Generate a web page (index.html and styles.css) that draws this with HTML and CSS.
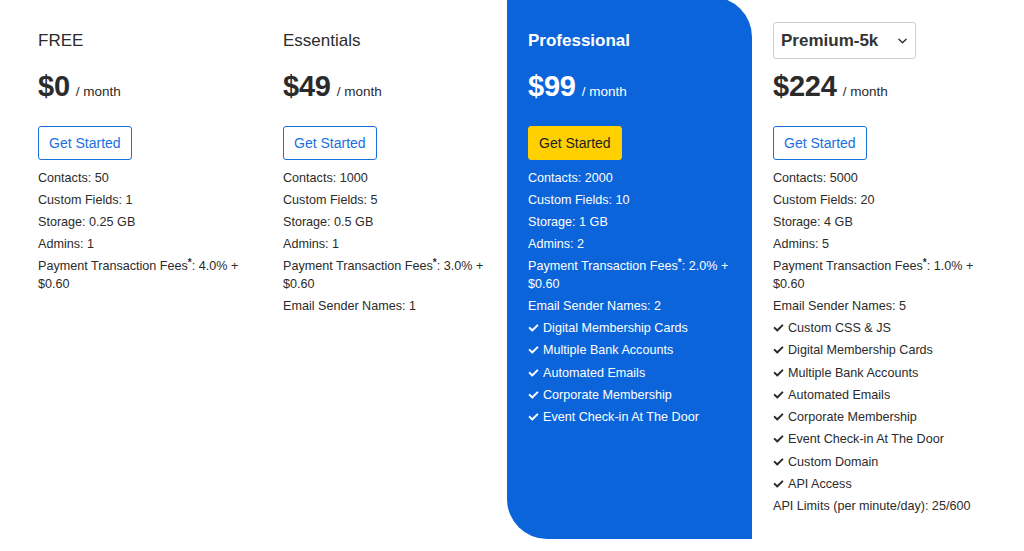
FILE: index.html
```html
<!DOCTYPE html>
<html>
<head>
<meta charset="utf-8">
<link rel="stylesheet" href="styles.css">
</head>
<body>
<svg width="0" height="0" style="position:absolute">
  <defs>
    <symbol id="chk" viewBox="0 0 512 512"><path d="M173.9 439.4L7.5 273c-10-10-10-26.2 0-36.2l36.2-36.2c10-10 26.2-10 36.2 0L192 312.7 432.1 72.6c10-10 26.2-10 36.2 0l36.2 36.2c10 10 10 26.2 0 36.2L210.1 439.4c-10 10-26.2 10-36.2 0z"/></symbol>
  </defs>
</svg>
<div class="plans">
  <section class="plan">
    <div class="head"><h2 class="name">FREE</h2></div>
    <div class="price"><span class="amount">$0</span><span class="per">/ month</span></div>
    <button class="btn">Get Started</button>
    <ul class="features">
      <li>Contacts: 50</li>
      <li>Custom Fields: 1</li>
      <li>Storage: 0.25 GB</li>
      <li>Admins: 1</li>
      <li>Payment Transaction Fees<span class="ast">*</span>: 4.0% +<br>$0.60</li>
    </ul>
  </section>
  <section class="plan">
    <div class="head"><h2 class="name">Essentials</h2></div>
    <div class="price"><span class="amount">$49</span><span class="per">/ month</span></div>
    <button class="btn">Get Started</button>
    <ul class="features">
      <li>Contacts: 1000</li>
      <li>Custom Fields: 5</li>
      <li>Storage: 0.5 GB</li>
      <li>Admins: 1</li>
      <li>Payment Transaction Fees<span class="ast">*</span>: 3.0% +<br>$0.60</li>
      <li>Email Sender Names: 1</li>
    </ul>
  </section>
  <section class="plan featured">
    <div class="head"><h2 class="name">Professional</h2></div>
    <div class="price"><span class="amount">$99</span><span class="per">/ month</span></div>
    <button class="btn btn-yellow">Get Started</button>
    <ul class="features">
      <li>Contacts: 2000</li>
      <li>Custom Fields: 10</li>
      <li>Storage: 1 GB</li>
      <li>Admins: 2</li>
      <li>Payment Transaction Fees<span class="ast">*</span>: 2.0% +<br>$0.60</li>
      <li>Email Sender Names: 2</li>
      <li class="check"><svg class="ico"><use href="#chk"/></svg>Digital Membership Cards</li>
      <li class="check"><svg class="ico"><use href="#chk"/></svg>Multiple Bank Accounts</li>
      <li class="check"><svg class="ico"><use href="#chk"/></svg>Automated Emails</li>
      <li class="check"><svg class="ico"><use href="#chk"/></svg>Corporate Membership</li>
      <li class="check"><svg class="ico"><use href="#chk"/></svg>Event Check-in At The Door</li>
    </ul>
  </section>
  <section class="plan">
    <div class="head">
      <div class="select">Premium-5k<svg class="chev" viewBox="0 0 10 6"><path d="M1 1l4 4 4-4" fill="none" stroke="#333" stroke-width="1.6" stroke-linecap="round" stroke-linejoin="round"/></svg></div>
    </div>
    <div class="price"><span class="amount">$224</span><span class="per">/ month</span></div>
    <button class="btn">Get Started</button>
    <ul class="features">
      <li>Contacts: 5000</li>
      <li>Custom Fields: 20</li>
      <li>Storage: 4 GB</li>
      <li>Admins: 5</li>
      <li>Payment Transaction Fees<span class="ast">*</span>: 1.0% +<br>$0.60</li>
      <li>Email Sender Names: 5</li>
      <li class="check"><svg class="ico"><use href="#chk"/></svg>Custom CSS &amp; JS</li>
      <li class="check"><svg class="ico"><use href="#chk"/></svg>Digital Membership Cards</li>
      <li class="check"><svg class="ico"><use href="#chk"/></svg>Multiple Bank Accounts</li>
      <li class="check"><svg class="ico"><use href="#chk"/></svg>Automated Emails</li>
      <li class="check"><svg class="ico"><use href="#chk"/></svg>Corporate Membership</li>
      <li class="check"><svg class="ico"><use href="#chk"/></svg>Event Check-in At The Door</li>
      <li class="check"><svg class="ico"><use href="#chk"/></svg>Custom Domain</li>
      <li class="check"><svg class="ico"><use href="#chk"/></svg>API Access</li>
      <li>API Limits (per minute/day): 25/600</li>
    </ul>
  </section>
</div>
</body>
</html>
```
FILE: styles.css
```css
html, body {
  margin: 0;
  padding: 0;
  background: #fff;
}
body {
  font-family: "Liberation Sans", Arial, sans-serif;
  color: #2b2b2b;
  overflow: hidden;
}
.plans {
  display: flex;
  align-items: stretch;
  padding-left: 17px;
  margin-top: -3px;
}
.plan {
  width: 245px;
  box-sizing: border-box;
  padding: 25px 21px 20px;
  display: flex;
  flex-direction: column;
  align-items: flex-start;
}
.featured {
  background: #0b64da;
  color: #fff;
  border-radius: 0 40px 0 40px;
}
.head {
  height: 37px;
  display: flex;
  align-items: center;
}
.name {
  margin: 0;
  font-size: 17px;
  font-weight: 500;
  line-height: 20px;
  color: #2b2b2b;
}
.featured .name {
  color: #fff;
  font-weight: 600;
}
.select {
  width: 143px;
  height: 37px;
  box-sizing: border-box;
  border: 1px solid #cfcfcf;
  border-radius: 3px;
  background: #fff;
  display: flex;
  align-items: center;
  justify-content: space-between;
  padding: 0 8px 0 7px;
  font-size: 17px;
  font-weight: 700;
  color: #333;
}
.chev {
  width: 9px;
  height: 6px;
}
.price {
  margin-top: 10px;
  height: 34px;
  display: flex;
  align-items: baseline;
}
.amount {
  font-size: 29px;
  font-weight: 600;
  line-height: 34px;
  letter-spacing: -0.2px;
}
.per {
  font-size: 13.5px;
  margin-left: 6px;
}
.btn {
  margin-top: 23px;
  height: 34px;
  padding: 0 10px;
  font-family: inherit;
  font-size: 14px;
  color: #1a6fe0;
  background: #fff;
  border: 1.5px solid #1a6fe0;
  border-radius: 3px;
}
.btn-yellow {
  background: #ffd000;
  border-color: #ffd000;
  color: #222;
}
.features {
  list-style: none;
  margin: 9px 0 0;
  padding: 0;
  font-size: 12.6px;
  line-height: 18px;
  width: 203px;
}
.features li {
  margin-bottom: 4px;
}
.features li.check {
  margin-bottom: 4.3px;
}
.ast {
  display: inline-block;
  font-size: 10px;
  font-weight: 700;
  line-height: 10px;
  vertical-align: top;
  margin-top: 1px;
}
.check {
  display: flex;
  align-items: center;
}
.ico {
  width: 11px;
  height: 10px;
  fill: currentColor;
  margin-right: 4px;
  flex: none;
}
```
